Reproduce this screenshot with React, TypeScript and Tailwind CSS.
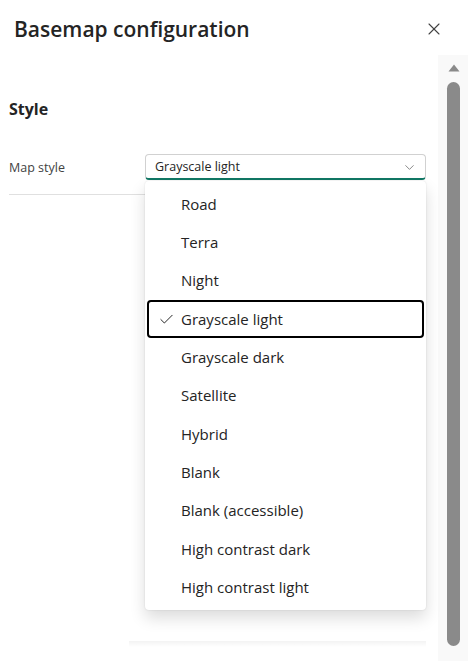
import { Check, ChevronDown, X } from "lucide-react";

const styles = [
  "Road",
  "Terra",
  "Night",
  "Grayscale light",
  "Grayscale dark",
  "Satellite",
  "Hybrid",
  "Blank",
  "Blank (accessible)",
  "High contrast dark",
  "High contrast light",
];

export default function App() {
  const selected = "Grayscale light";
  return (
    <div className="w-[468px] h-[661px] bg-white overflow-hidden flex flex-col text-[#242424]" style={{ fontFamily: '"Open Sans", "Noto Sans", sans-serif' }}>
      {/* Header */}
      <div className="h-[55px] shrink-0 flex items-start justify-between pl-[14px] pr-[24px] pt-[14px]">
        <h1 className="text-[21px] leading-[30px] font-semibold">Basemap configuration</h1>
        <button className="mt-[5px] text-[#424242]">
          <X size={20} strokeWidth={1.3} />
        </button>
      </div>

      {/* Body */}
      <div className="flex-1 flex min-h-0">
        <div className="flex-1 flex flex-col pl-[9px] pr-[12px]">
          <h2 className="mt-[42px] text-[16px] leading-[24px] font-bold">Style</h2>

          <div className="mt-[33px] flex items-center border-b border-[#e0e0e0] pb-[14px]">
            <span className="w-[136px] pt-[3px] text-[12.5px] text-[#424242]">Map style</span>
            <div className="relative flex-1">
              <div className="h-[26px] flex items-center justify-between pl-[9px] pr-[8px] pt-[2px] border border-[#d1d1d1] border-b-2 border-b-[#117865] rounded-[4px] text-[12.5px]">
                <span>Grayscale light</span>
                <ChevronDown size={15} strokeWidth={1.2} className="text-[#616161]" />
              </div>

              {/* Listbox */}
              <div className="absolute left-0 top-[27px] w-[281px] bg-white rounded-[4px] shadow-[0_8px_16px_rgba(0,0,0,0.14),0_0_2px_rgba(0,0,0,0.12)] py-[4px] px-[2px] z-10">
                {styles.map((s) => {
                  const active = s === selected;
                  return (
                    <div
                      key={s}
                      className={`h-[38.3px] flex items-center rounded-[4px] text-[15px] ${active ? "border-2 border-black" : "border-2 border-transparent"}`}
                    >
                      <span className="w-[32px] flex justify-end pr-[6px]">
                        {active && <Check size={17} strokeWidth={1.4} />}
                      </span>
                      <span>{s}</span>
                    </div>
                  );
                })}
              </div>
            </div>
          </div>

          <div className="flex-1" />
          <div className="h-[6px] mb-[14px] ml-[120px] bg-gradient-to-b from-[#f3f3f3] to-white" />
        </div>

        {/* Scrollbar */}
        <div className="w-[30px] shrink-0 bg-[#f9f9f9] flex flex-col items-center pt-[9px] pb-[15px] pl-[1px]">
          <svg width="12" height="8" viewBox="0 0 12 8">
            <path d="M6 0.5 L11.5 7.5 L0.5 7.5 Z" fill="#8a8a8a" />
          </svg>
          <div className="mt-[10px] w-[13px] flex-1 rounded-full bg-[#8a8a8a]" />
        </div>
      </div>
    </div>
  );
}
